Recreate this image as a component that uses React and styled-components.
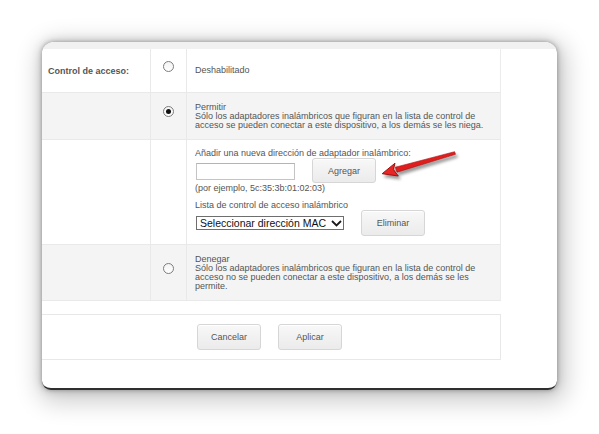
import React from "react";
import styled, { createGlobalStyle } from "styled-components";

const GlobalStyle = createGlobalStyle`
  html, body {
    margin: 0;
    padding: 0;
    background: #ffffff;
  }
  body {
    font-family: "Liberation Sans", Arial, sans-serif;
    color: #555;
  }
  * { box-sizing: border-box; }
`;

const Page = styled.div`
  width: 599px;
  height: 434px;
  padding: 42px 0 0 42px;
  background: #fff;
`;

const Card = styled.div`
  position: relative;
  width: 515px;
  height: 348px;
  background: #fff;
  border-radius: 12px 12px 9px 9px;
  border-bottom: 2px solid #2f2f2f;
  overflow: hidden;
  box-shadow: 0 0 4px rgba(0, 0, 0, 0.3), 0 0 10px 2px rgba(0, 0, 0, 0.12),
    3px 6px 24px 6px rgba(0, 0, 0, 0.2);
`;

const TopBand = styled.div`
  height: 7px;
  background: #f1f1f1;
`;

const Table = styled.div`
  width: 459px;
  border-right: 1px solid #ececec;
`;

const Row = styled.div`
  display: grid;
  grid-template-columns: 109px 36px 1fr;
  height: ${(p) => p.$h}px;
  background: ${(p) => (p.$shade ? "#f4f4f4" : "#ffffff")};
  border-bottom: 1px solid #e9e9e9;
`;

const LabelCell = styled.div`
  display: flex;
  align-items: center;
  padding-left: 6px;
  border-right: 1px solid #e9e9e9;
  font-size: 9px;
  font-weight: bold;
  color: #555;
`;

const RadioCell = styled.div`
  display: flex;
  align-items: center;
  justify-content: center;
  padding-bottom: 9px;
  border-right: 1px solid #e9e9e9;
`;

const ContentCell = styled.div`
  display: flex;
  flex-direction: column;
  justify-content: ${(p) => (p.$top ? "flex-start" : "center")};
  padding: ${(p) => (p.$top ? "9px" : "0")} 16px 0 8px;
  font-size: 9px;
  line-height: 9px;
  color: #555;
`;

const Radio = styled.span`
  position: relative;
  display: inline-block;
  width: 11px;
  height: 11px;
  border-radius: 50%;
  border: 1px solid #7c7c7c;
  background: linear-gradient(#f4f4f4, #ffffff);

  &::after {
    content: "";
    position: absolute;
    left: 2px;
    top: 2px;
    width: 5px;
    height: 5px;
    border-radius: 50%;
    background: #111;
    display: ${(p) => (p.$checked ? "block" : "none")};
  }
`;

const Text = styled.div`
  margin-top: ${(p) => p.$mt || 0}px;
`;

const ControlRow = styled.div`
  display: flex;
  align-items: center;
  gap: 17px;
  height: ${(p) => p.$h}px;
  padding-left: 1px;
`;

const TextInput = styled.input`
  width: 99px;
  height: 17px;
  margin: 1px 0 0 0;
  padding: 0 3px;
  border: 1px solid #c4c4c4;
  border-top-color: #b4b4b4;
  background: #fff;
  font-family: inherit;
  font-size: 10px;
  outline: none;
`;

const SelectWrap = styled.div`
  position: relative;
  width: 148px;
  height: 14px;
`;

const Select = styled.select`
  appearance: none;
  -webkit-appearance: none;
  width: 100%;
  height: 100%;
  margin: 0;
  padding: 0 0 0 3px;
  border: 1px solid #6e6e6e;
  border-radius: 0;
  background: #fff;
  color: #111;
  font-family: "Liberation Sans", Arial, sans-serif;
  font-size: 10.5px;
  line-height: 12px;
  outline: none;
`;

const Chevron = styled.svg`
  position: absolute;
  right: 2px;
  top: 4px;
  pointer-events: none;
`;

const Button = styled.button`
  width: 64px;
  height: ${(p) => p.$h || 26}px;
  padding: 0;
  border: 1px solid #d6d6d6;
  border-radius: 3px;
  background: linear-gradient(#f8f8f8, #ebebeb);
  box-shadow: inset 0 1px 0 #fff;
  color: #555;
  font-family: "Liberation Sans", Arial, sans-serif;
  font-size: 9px;
  cursor: pointer;
`;

const Footer = styled.div`
  display: flex;
  align-items: center;
  gap: 17px;
  width: 459px;
  height: 46px;
  margin-top: 13px;
  padding-left: 155px;
  border: 1px solid #e8e8e8;
  border-left: none;
`;

const Pointer = styled.svg`
  position: absolute;
  left: 338px;
  top: 106px;
  overflow: visible;
  filter: drop-shadow(2px 3px 1.5px rgba(0, 0, 0, 0.4));
`;

const DESC_ALLOW =
  "Sólo los adaptadores inalámbricos que figuran en la lista de control de acceso se pueden conectar a este dispositivo, a los demás se les niega.";
const DESC_DENY =
  "Sólo los adaptadores inalámbricos que figuran en la lista de control de acceso no se pueden conectar a este dispositivo, a los demás se les permite.";

export default function App() {
  return (
    <>
      <GlobalStyle />
      <Page>
        <Card>
          <TopBand />
          <Table>
            <Row $h={44}>
              <LabelCell>Control de acceso:</LabelCell>
              <RadioCell>
                <Radio role="radio" aria-checked="false" />
              </RadioCell>
              <ContentCell>Deshabilitado</ContentCell>
            </Row>

            <Row $h={47} $shade>
              <LabelCell />
              <RadioCell>
                <Radio role="radio" aria-checked="true" $checked />
              </RadioCell>
              <ContentCell>
                <Text>Permitir</Text>
                <Text>{DESC_ALLOW}</Text>
              </ContentCell>
            </Row>

            <Row $h={105}>
              <LabelCell />
              <RadioCell />
              <ContentCell $top>
                <Text>Añadir una nueva dirección de adaptador inalámbrico:</Text>
                <ControlRow $h={25}>
                  <TextInput type="text" />
                  <Button $h={25}>Agregar</Button>
                </ControlRow>
                <Text $mt={1}>(por ejemplo, 5c:35:3b:01:02:03)</Text>
                <Text $mt={8}>Lista de control de acceso inalámbrico</Text>
                <ControlRow $h={26}>
                  <SelectWrap>
                    <Select defaultValue="none">
                      <option value="none">Seleccionar dirección MAC</option>
                    </Select>
                    <Chevron width="11" height="7" viewBox="0 0 11 7">
                      <path d="M1 1 L5.5 5.5 L10 1" fill="none" stroke="#1a1a1a" strokeWidth="1.8" />
                    </Chevron>
                  </SelectWrap>
                  <Button>Eliminar</Button>
                </ControlRow>
              </ContentCell>
            </Row>

            <Row $h={56} $shade>
              <LabelCell />
              <RadioCell>
                <Radio role="radio" aria-checked="false" />
              </RadioCell>
              <ContentCell>
                <Text>Denegar</Text>
                <Text>{DESC_DENY}</Text>
              </ContentCell>
            </Row>
          </Table>

          <Footer>
            <Button>Cancelar</Button>
            <Button>Aplicar</Button>
          </Footer>

          {/* red annotation arrow pointing at the add button */}
          <Pointer width="82" height="32" viewBox="0 0 82 32">
            <polygon
              points="75.5,6.3 74.6,3.7 15.4,19.2 17,24.2"
              fill="#e01e1e"
              stroke="#a51010"
              strokeWidth="0.6"
              strokeLinejoin="round"
            />
            <polygon
              points="2.2,25.7 15,15.2 13.4,21.6 18.3,28"
              fill="#e82626"
              stroke="#a00f0f"
              strokeWidth="1"
              strokeLinejoin="round"
            />
          </Pointer>
        </Card>
      </Page>
    </>
  );
}
